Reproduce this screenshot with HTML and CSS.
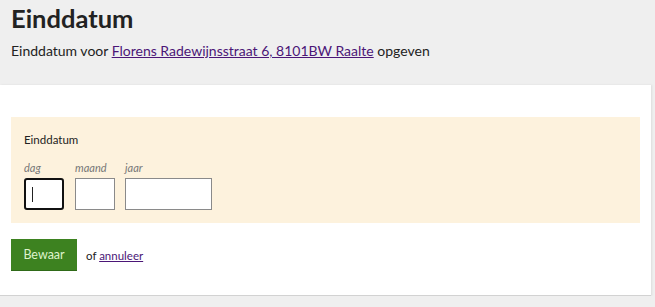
FILE: index.html
```html
<!DOCTYPE html>
<html lang="nl">
<head>
<meta charset="utf-8">
<title>Einddatum</title>
<link rel="stylesheet" href="styles.css">
</head>
<body>
<header class="page-head">
  <h1 class="title">Einddatum</h1>
  <p class="intro">Einddatum voor <a href="#" class="link">Florens Radewijnsstraat 6, 8101BW Raalte</a> opgeven</p>
</header>
<main class="card">
  <fieldset class="date-box">
    <div class="legend">Einddatum</div>
    <div class="fields">
      <label class="field">
        <span class="field-label">dag</span>
        <span class="input input-day focused"><span class="caret"></span></span>
      </label>
      <label class="field field-month">
        <span class="field-label">maand</span>
        <span class="input input-month"></span>
      </label>
      <label class="field field-year">
        <span class="field-label">jaar</span>
        <span class="input input-year"></span>
      </label>
    </div>
  </fieldset>
  <div class="actions">
    <button class="btn" type="button">Bewaar</button>
    <span class="or">of <a href="#" class="link">annuleer</a></span>
  </div>
</main>
</body>
</html>
```
FILE: styles.css
```css
html, body {
  margin: 0;
  padding: 0;
  background: #efefef;
  font-family: Lato, "Noto Sans", sans-serif;
  color: #222;
}
.page-head {
  padding: 4px 11px 0 11px;
  height: 81px;
  box-sizing: border-box;
}
.title {
  margin: 0;
  font-size: 25.5px;
  line-height: 28px;
  font-weight: 700;
  color: #222;
}
.intro {
  margin: 10px 0 0 0;
  font-size: 14px;
  line-height: 18px;
  color: #222;
}
.link {
  color: #4b1677;
  text-decoration: underline;
}
.card {
  display: block;
  margin-top: 4px;
  width: 651px;
  background: #fff;
  border-bottom: 1px solid #d2d2d2;
  box-shadow: 1px 0 2px rgba(0,0,0,0.08);
  padding: 32px 11px 24px 11px;
  box-sizing: border-box;
  height: 211px;
}
.date-box {
  margin: 0;
  border: 0;
  background: #fdf2dd;
  padding: 16px 13px 0 13px;
  height: 106px;
  box-sizing: border-box;
  width: 629px;
}
.legend {
  font-size: 11.5px;
  line-height: 14px;
  color: #222;
}
.fields {
  display: flex;
  margin-top: 14px;
}
.field {
  display: flex;
  flex-direction: column;
}
.field-month { margin-left: 11px; }
.field-year { margin-left: 10px; }
.field-label {
  font-size: 11px;
  font-style: italic;
  color: #777;
  line-height: 13px;
  height: 17px;
}
.input {
  display: block;
  height: 32px;
  box-sizing: border-box;
  background: #fff;
  border: 1px solid #8a8a8a;
  position: relative;
}
.input-day { width: 40px; }
.input-month { width: 40px; }
.input-year { width: 87px; }
.focused {
  border: 2px solid #111;
  border-radius: 3px;
}
.caret {
  position: absolute;
  left: 6px;
  top: 7px;
  width: 1px;
  height: 15px;
  background: #222;
}
.actions {
  display: flex;
  align-items: center;
  margin-top: 16px;
  gap: 9px;
}
.btn {
  background: #3d8220;
  color: #dff3cc;
  border: 0;
  border-bottom: 1px solid #2f6a18;
  width: 66px;
  height: 32px;
  font-family: Lato, "Noto Sans", sans-serif;
  font-size: 12.5px;
  padding: 0;
}
.or {
  font-size: 11.5px;
  color: #222;
}
```
